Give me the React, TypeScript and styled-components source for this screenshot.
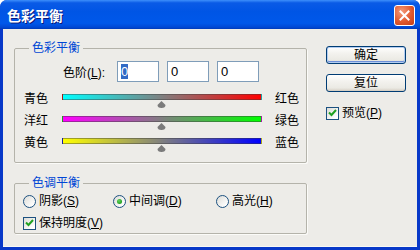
import styled, { createGlobalStyle } from 'styled-components';

const GlobalStyle = createGlobalStyle`
  html, body {
    margin: 0;
    padding: 0;
    background: #ffffff;
  }
  body {
    font-family: "Liberation Sans", "Noto Sans CJK SC", sans-serif;
    font-size: 12px;
    color: #000;
  }
`;

const Window = styled.div`
  width: 420px;
  height: 250px;
  box-sizing: border-box;
  display: flex;
  flex-direction: column;
  background: #0838c8;
  border-radius: 7px 7px 0 0;
  overflow: hidden;
  padding: 0 3px 3px 3px;
`;

const TitleBar = styled.div`
  height: 29px;
  margin: 0 -3px;
  padding: 0 5px 0 7px;
  display: flex;
  align-items: center;
  justify-content: space-between;
  background: linear-gradient(
    to bottom,
    #3d8ffb 0%,
    #0a5ae6 10%,
    #0055e5 40%,
    #0058ea 80%,
    #0048d4 94%,
    #003bb8 100%
  );
`;

const Title = styled.span`
  font-family: "Noto Sans CJK SC", sans-serif;
  font-size: 14px;
  font-weight: bold;
  color: #fff;
  text-shadow: 1px 1px 0 #0a1a7a;
`;

const CloseButton = styled.div`
  width: 19px;
  height: 19px;
  margin-top: 1px;
  border: 1px solid #fff;
  border-radius: 3px;
  background: radial-gradient(circle at 35% 30%, #f59b7a 0%, #e0592f 55%, #c23c16 100%);
  display: flex;
  align-items: center;
  justify-content: center;
`;

const Body = styled.div`
  flex: 1;
  display: flex;
  background: #edece8;
  padding: 12px 10px 0 11px;
  border-bottom: 1px solid #f8f8f4;
`;

const LeftColumn = styled.div`
  width: 293px;
  display: flex;
  flex-direction: column;
  gap: 13px;
`;

const RightColumn = styled.div`
  width: 80px;
  margin-left: 19px;
  padding-top: 5px;
  display: flex;
  flex-direction: column;
`;

const Group = styled.fieldset`
  margin: 0;
  padding: ${(p: { $pad: string }) => p.$pad};
  border: 1px solid #b4b3aa;
  border-radius: 2px;
  box-shadow: 1px 1px 0 #fbfbf8;
  min-width: 0;
`;

const Legend = styled.legend`
  margin-left: 14px;
  padding: 0 3px;
  font-size: 12px;
  line-height: 14px;
  color: #0046d5;
`;

const LevelRow = styled.div`
  display: flex;
  align-items: center;
  height: 21px;
  padding-left: 48px;
  margin-bottom: 9px;
`;

const LevelLabel = styled.span`
  width: 44px;
  margin-right: 10px;
  white-space: nowrap;
`;

const NumBox = styled.div`
  width: 42px;
  height: 21px;
  box-sizing: border-box;
  border: 1px solid #7f9db9;
  background: #fff;
  margin-right: 8px;
  padding-left: 3px;
  display: flex;
  align-items: center;
  font-size: 13px;
`;

const Selected = styled.span`
  background: #316ac5;
  color: #fff;
  line-height: 15px;
`;

const SliderRow = styled.div`
  display: flex;
  align-items: flex-start;
  height: 22px;
  padding-left: 9px;
`;

const SideLabel = styled.span`
  width: ${(p: { $w: number }) => p.$w}px;
  line-height: 14px;
  margin-top: 1px;
`;

const TrackColumn = styled.div`
  width: 200px;
  margin-top: 3px;
  margin-right: 13px;
  display: flex;
  flex-direction: column;
  align-items: center;
`;

const Track = styled.div`
  width: 200px;
  height: 6px;
  box-sizing: border-box;
  border: 1px solid rgba(60, 60, 60, 0.45);
  background: linear-gradient(to right, ${(p: { $from: string; $to: string }) => p.$from}, ${(p) => p.$to});
`;

const Thumb = styled.svg`
  margin-top: 1px;
  margin-left: -1px;
`;

const OptionRow = styled.div`
  display: grid;
  grid-template-columns: 90px 103px auto;
  align-items: center;
  height: 16px;
  padding-left: 8px;
`;

const CheckRow = styled.div`
  display: flex;
  align-items: center;
  height: 16px;
  padding-left: ${(p: { $indent: number }) => p.$indent}px;
  margin-top: ${(p: { $indent: number; $top: number }) => p.$top}px;
`;

const Option = styled.label`
  display: flex;
  align-items: center;
  gap: 3px;
  white-space: nowrap;
`;

const OptionText = styled.span`
  line-height: 14px;
`;

const RadioCircle = styled.span`
  width: 13px;
  height: 13px;
  box-sizing: border-box;
  border-radius: 50%;
  border: 1px solid #1c5180;
  background: linear-gradient(135deg, #dcdcd7 0%, #ffffff 85%);
  display: flex;
  align-items: center;
  justify-content: center;
`;

const RadioDot = styled.span`
  width: 5px;
  height: 5px;
  border-radius: 50%;
  background: radial-gradient(circle at 40% 35%, #63d35f 0%, #21a121 70%);
`;

const CheckBox = styled.span`
  width: 13px;
  height: 13px;
  box-sizing: border-box;
  border: 1px solid #1c5180;
  background: linear-gradient(135deg, #dcdcd7 0%, #ffffff 85%);
  display: flex;
  align-items: center;
  justify-content: center;
`;

const Key = styled.span`
  text-decoration: underline;
`;

const Button = styled.button`
  width: 80px;
  height: 18px;
  box-sizing: border-box;
  padding: 0;
  margin-bottom: 10px;
  border: 1px solid #003c74;
  border-radius: 3px;
  font-family: "Liberation Sans", "Noto Sans CJK SC", sans-serif;
  font-size: 12px;
  line-height: 14px;
  color: #000;
  background: linear-gradient(to bottom, #ffffff 0%, #f3f2ee 40%, #ebeae4 80%, #d6d0c5 100%);
  box-shadow: ${(p: { $default?: boolean }) =>
    p.$default ? 'inset 0 0 0 1px #b3cdf1, inset 0 -1px 0 1px #6d8fd8' : 'inset 0 -1px 0 #d6d0c5'};
`;

function Check() {
  return (
    <svg width="9" height="8" viewBox="0 0 9 8">
      <polyline points="1,3.5 3.5,6 8,1" fill="none" stroke="#21a121" strokeWidth="2" />
    </svg>
  );
}

const sliders = [
  { left: '青色', right: '红色', from: '#00ffff', to: '#ff0000' },
  { left: '洋红', right: '绿色', from: '#ff00ff', to: '#00ff00' },
  { left: '黄色', right: '蓝色', from: '#ffff00', to: '#0000ff' },
];

function App() {
  return (
    <>
      <GlobalStyle />
      <Window>
        <TitleBar>
          <Title>色彩平衡</Title>
          <CloseButton>
            <svg width="11" height="11" viewBox="0 0 11 11">
              <path d="M1.5 1.5 L9.5 9.5 M9.5 1.5 L1.5 9.5" stroke="#fff" strokeWidth="2" strokeLinecap="square" />
            </svg>
          </CloseButton>
        </TitleBar>
        <Body>
          <LeftColumn>
            <Group $pad="6px 0 5px 0">
              <Legend>色彩平衡</Legend>
              <LevelRow>
                <LevelLabel>
                  色阶(<Key>L</Key>):
                </LevelLabel>
                <NumBox>
                  <Selected>0</Selected>
                </NumBox>
                <NumBox>0</NumBox>
                <NumBox>0</NumBox>
              </LevelRow>
              {sliders.map((s) => (
                <SliderRow key={s.left}>
                  <SideLabel $w={38}>{s.left}</SideLabel>
                  <TrackColumn>
                    <Track $from={s.from} $to={s.to} />
                    <Thumb width="9" height="7" viewBox="0 0 9 7">
                      <path d="M4.5 0 L8.5 4 Q8.5 7 4.5 7 Q0.5 7 0.5 4 Z" fill="#7b7b7b" />
                    </Thumb>
                  </TrackColumn>
                  <SideLabel $w={30}>{s.right}</SideLabel>
                </SliderRow>
              ))}
            </Group>
            <Group $pad="3px 0 2px 0">
              <Legend>色调平衡</Legend>
              <OptionRow>
                <Option>
                  <RadioCircle />
                  <OptionText>
                    阴影(<Key>S</Key>)
                  </OptionText>
                </Option>
                <Option>
                  <RadioCircle>
                    <RadioDot />
                  </RadioCircle>
                  <OptionText>
                    中间调(<Key>D</Key>)
                  </OptionText>
                </Option>
                <Option>
                  <RadioCircle />
                  <OptionText>
                    高光(<Key>H</Key>)
                  </OptionText>
                </Option>
              </OptionRow>
              <CheckRow $indent={8} $top={6}>
                <Option>
                  <CheckBox>
                    <Check />
                  </CheckBox>
                  <OptionText>
                    保持明度(<Key>V</Key>)
                  </OptionText>
                </Option>
              </CheckRow>
            </Group>
          </LeftColumn>
          <RightColumn>
            <Button $default>确定</Button>
            <Button>复位</Button>
            <CheckRow $indent={0} $top={3}>
              <Option>
                <CheckBox>
                  <Check />
                </CheckBox>
                <OptionText>
                  预览(<Key>P</Key>)
                </OptionText>
              </Option>
            </CheckRow>
          </RightColumn>
        </Body>
      </Window>
    </>
  );
}

export default App;
